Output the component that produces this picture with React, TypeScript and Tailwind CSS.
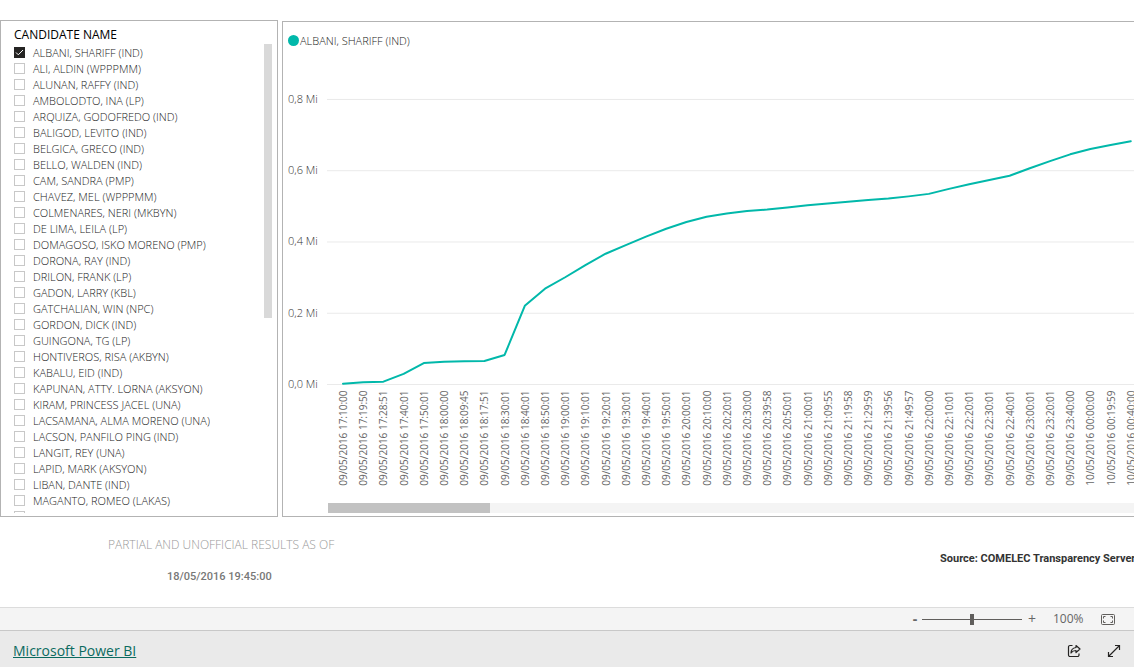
import { useState } from "react";

const candidates = [
  "ALBANI, SHARIFF (IND)",
  "ALI, ALDIN (WPPPMM)",
  "ALUNAN, RAFFY (IND)",
  "AMBOLODTO, INA (LP)",
  "ARQUIZA, GODOFREDO (IND)",
  "BALIGOD, LEVITO (IND)",
  "BELGICA, GRECO (IND)",
  "BELLO, WALDEN (IND)",
  "CAM, SANDRA (PMP)",
  "CHAVEZ, MEL (WPPPMM)",
  "COLMENARES, NERI (MKBYN)",
  "DE LIMA, LEILA (LP)",
  "DOMAGOSO, ISKO MORENO (PMP)",
  "DORONA, RAY (IND)",
  "DRILON, FRANK (LP)",
  "GADON, LARRY (KBL)",
  "GATCHALIAN, WIN (NPC)",
  "GORDON, DICK (IND)",
  "GUINGONA, TG (LP)",
  "HONTIVEROS, RISA (AKBYN)",
  "KABALU, EID (IND)",
  "KAPUNAN, ATTY. LORNA (AKSYON)",
  "KIRAM, PRINCESS JACEL (UNA)",
  "LACSAMANA, ALMA MORENO (UNA)",
  "LACSON, PANFILO PING (IND)",
  "LANGIT, REY (UNA)",
  "LAPID, MARK (AKSYON)",
  "LIBAN, DANTE (IND)",
  "MAGANTO, ROMEO (LAKAS)",
];

// [transmission time, votes in thousands]
const votes: [string, number][] = [
  ["09/05/2016 17:10:00", 2],
  ["09/05/2016 17:19:50", 6],
  ["09/05/2016 17:28:51", 8],
  ["09/05/2016 17:40:01", 30],
  ["09/05/2016 17:50:01", 60],
  ["09/05/2016 18:00:00", 64],
  ["09/05/2016 18:09:45", 65],
  ["09/05/2016 18:17:51", 66],
  ["09/05/2016 18:30:01", 83],
  ["09/05/2016 18:40:01", 221],
  ["09/05/2016 18:50:01", 269],
  ["09/05/2016 19:00:01", 301],
  ["09/05/2016 19:10:01", 335],
  ["09/05/2016 19:20:01", 367],
  ["09/05/2016 19:30:01", 391],
  ["09/05/2016 19:40:01", 415],
  ["09/05/2016 19:50:01", 437],
  ["09/05/2016 20:00:01", 456],
  ["09/05/2016 20:10:00", 471],
  ["09/05/2016 20:20:01", 480],
  ["09/05/2016 20:30:00", 487],
  ["09/05/2016 20:39:58", 491],
  ["09/05/2016 20:50:01", 497],
  ["09/05/2016 21:00:01", 503],
  ["09/05/2016 21:09:55", 508],
  ["09/05/2016 21:19:58", 513],
  ["09/05/2016 21:29:59", 518],
  ["09/05/2016 21:39:56", 522],
  ["09/05/2016 21:49:57", 528],
  ["09/05/2016 22:00:00", 535],
  ["09/05/2016 22:10:01", 549],
  ["09/05/2016 22:20:01", 562],
  ["09/05/2016 22:30:01", 574],
  ["09/05/2016 22:40:01", 586],
  ["09/05/2016 23:00:01", 607],
  ["09/05/2016 23:20:01", 627],
  ["09/05/2016 23:40:00", 646],
  ["10/05/2016 00:00:00", 661],
  ["10/05/2016 00:19:59", 672],
  ["10/05/2016 00:40:00", 683],
];

const ticks = [
  { label: "0,8 Mi", value: 800 },
  { label: "0,6 Mi", value: 600 },
  { label: "0,4 Mi", value: 400 },
  { label: "0,2 Mi", value: 200 },
  { label: "0,0 Mi", value: 0 },
];

const STEP = 20.2;
const BASE = 335.5;
const toX = (i: number) => 60 + i * STEP;
const toY = (v: number) => BASE - v * 0.3563;

const boxStyle =
  "peer size-[11px] appearance-none border border-[#c8c8c8] bg-white checked:border-[#252423] checked:bg-[#252423]";

const Slicer = () => {
  const [selected, setSelected] = useState<string[]>([candidates[0]]);

  const toggle = (name: string) => {
    setSelected((prev) =>
      prev.includes(name) ? prev.filter((n) => n !== name) : [...prev, name]
    );
  };

  return (
    <section
      aria-labelledby="slicer-title"
      className="flex h-[497px] w-[278px] shrink-0 flex-col border border-[#b3b3b3] pr-[5px] pb-[3px] pl-[13px]"
    >
      <h2 id="slicer-title" className="pt-1 text-[12px] leading-5 text-black">
        CANDIDATE NAME
      </h2>
      <div className="-mt-px flex min-h-0 flex-1 justify-between">
        <ul className="overflow-hidden">
          {candidates.map((name) => (
            <li key={name}>
              <label className="flex h-4 items-center gap-2 text-[11px] leading-4 font-light whitespace-nowrap text-[#1a1a1a]">
                <span className="relative flex">
                  <input
                    type="checkbox"
                    checked={selected.includes(name)}
                    onChange={() => toggle(name)}
                    className={boxStyle}
                  />
                  <svg
                    viewBox="0 0 11 11"
                    className="pointer-events-none absolute inset-0 hidden size-[11px] peer-checked:block"
                  >
                    <path d="M2 5.5 4.3 7.8 9 3" fill="none" stroke="#fff" />
                  </svg>
                </span>
                <span className="pt-px">{name}</span>
              </label>
            </li>
          ))}
          <li className="flex h-4 items-center">
            <input type="checkbox" aria-label="Next candidate" className={boxStyle} />
          </li>
        </ul>
        <div className="h-[274px] w-2 bg-[#d9d9d9]" />
      </div>
    </section>
  );
};

const VotesChart = () => (
  <section className="mt-px min-w-0 flex-1 overflow-hidden border border-r-0 border-[#b3b3b3]">
    <div className="flex h-[27px] items-end gap-px pl-[5px] text-[11px] leading-4 font-light text-[#1a1a1a]">
      <span className="mb-[3px] size-[11px] rounded-full bg-[#01b8aa]" />
      ALBANI, SHARIFF (IND)
    </div>
    <svg width="100%" height="445" className="block">
      {ticks.map((t) => (
        <g key={t.label}>
          <text x="5" y={Math.floor(toY(t.value)) + 4} className="text-[11px] font-light" fill="#333333">
            {t.label}
          </text>
          <line x1="44" x2="100%" y1={toY(t.value)} y2={toY(t.value)} stroke="#eaeaea" />
        </g>
      ))}
      <polyline
        points={votes.map(([, v], i) => `${toX(i)},${toY(v)}`).join(" ")}
        fill="none"
        stroke="#01b8aa"
        strokeWidth="2"
        strokeLinejoin="round"
        strokeLinecap="round"
      />
      {votes.map(([time], i) => (
        <text
          key={time}
          transform={`translate(${toX(i) + 4} ${BASE + 6}) rotate(-90)`}
          textAnchor="end"
          fontSize="10"
          fill="#666666"
        >
          {time}
        </text>
      ))}
    </svg>
    <div className="mt-[9px] ml-[45px] h-[10px] bg-[#f4f4f4]">
      <div className="h-full w-[162px] bg-[#c2c2c2]" />
    </div>
  </section>
);

const ZoomBar = () => {
  const [zoom, setZoom] = useState(100);

  return (
    <div className="flex h-[23px] items-center justify-end border-t border-[#dcdcdc] bg-[#f4f4f4] pr-[19px] text-[12px] text-[#666666]">
      <button
        aria-label="Zoom out"
        className="w-3 text-center text-[14px] leading-5 font-bold"
        onClick={() => setZoom(Math.max(0, zoom - 10))}
      >
        -
      </button>
      <input
        type="range"
        aria-label="Zoom"
        min={0}
        max={200}
        value={zoom}
        onChange={(e) => setZoom(Number(e.target.value))}
        className="mx-px h-[11px] w-[100px] appearance-none bg-transparent [&::-webkit-slider-runnable-track]:h-px [&::-webkit-slider-runnable-track]:bg-[#605e5c] [&::-webkit-slider-thumb]:mt-[-5px] [&::-webkit-slider-thumb]:h-[11px] [&::-webkit-slider-thumb]:w-1 [&::-webkit-slider-thumb]:appearance-none [&::-webkit-slider-thumb]:bg-[#605e5c]"
      />
      <button
        aria-label="Zoom in"
        className="w-[18px] text-center text-[14px] leading-5"
        onClick={() => setZoom(Math.min(200, zoom + 10))}
      >
        +
      </button>
      <span className="w-[60px] pl-3">{zoom}%</span>
      <button aria-label="Fit to page">
        <svg width="14" height="11" viewBox="0 0 14 11" fill="none" stroke="#605e5c">
          <rect x=".5" y=".5" width="13" height="10" rx="1" />
          <path d="M4.500 2.500h-2v2M2.500 6.500v2h2M9.500 2.500h2v2M11.500 6.500v2h-2" />
        </svg>
      </button>
    </div>
  );
};

const App = () => {
  return (
    <div className="flex min-h-screen flex-col overflow-hidden bg-white font-['Open_Sans','Noto_Sans',sans-serif]">
      <main className="flex-1 pt-5">
        <div className="flex gap-1">
          <Slicer />
          <VotesChart />
        </div>
        <div className="flex justify-between">
          <div className="pt-5 pl-[108px]">
            <p className="text-[12px] leading-4 font-light text-[#999999]">
              PARTIAL AND UNOFFICIAL RESULTS AS OF
            </p>
            <p className="pt-4 pl-[59px] font-['Roboto',sans-serif] text-[11px] leading-4 font-medium text-[#777777]">
              18/05/2016 19:45:00
            </p>
          </div>
          <p className="w-[194px] overflow-hidden pt-[34px] font-['Roboto',sans-serif] text-[11px] leading-4 font-bold whitespace-nowrap text-[#333333]">
            Source: COMELEC Transparency Server
          </p>
        </div>
      </main>
      <ZoomBar />
      <footer className="flex h-[37px] items-center justify-between border-t border-[#c8c8c8] bg-[#eaeaea] px-[13px] pt-1">
        <a href="#" className="text-[14px] leading-5 text-[#0b6a5f] underline">
          Microsoft Power BI
        </a>
        <div className="flex items-center gap-[26px]">
          <button aria-label="Share">
            <svg width="14" height="14" viewBox="0 0 14 14" fill="none" stroke="#252423" strokeWidth="1.2" strokeLinejoin="round">
              <path d="M5.500 1.500H3A1.500 1.500 0 0 0 1.500 3v8A1.500 1.500 0 0 0 3 12.500h7.500A1.500 1.500 0 0 0 12 11V9.500" />
              <path d="M9 1.500 13 5 9 8.500V6.500C6.500 6.500 5 7.500 4 9c0-3 2-5 5-5.500z" />
            </svg>
          </button>
          <button aria-label="Full screen">
            <svg width="14" height="14" viewBox="0 0 14 14" fill="none" stroke="#252423" strokeWidth="1.2">
              <path d="M1.500 12.500 12.500 1.500M8 1.500h4.500V6M1.500 8v4.500H6" />
            </svg>
          </button>
        </div>
      </footer>
    </div>
  );
};

export default App;
